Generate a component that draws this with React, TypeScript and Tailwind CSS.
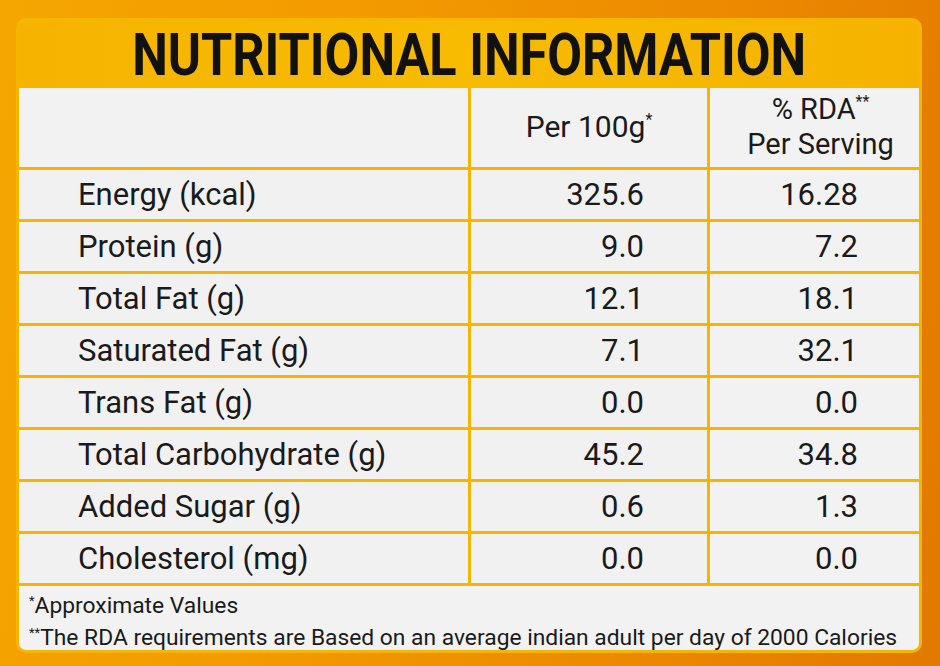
import React from "react";

const rows: [string, string, string][] = [
  ["Energy (kcal)", "325.6", "16.28"],
  ["Protein (g)", "9.0", "7.2"],
  ["Total Fat (g)", "12.1", "18.1"],
  ["Saturated Fat (g)", "7.1", "32.1"],
  ["Trans Fat (g)", "0.0", "0.0"],
  ["Total Carbohydrate (g)", "45.2", "34.8"],
  ["Added Sugar (g)", "0.6", "1.3"],
  ["Cholesterol (mg)", "0.0", "0.0"],
];

export default function App() {
  return (
    <div
      className="w-[940px] h-[666px] overflow-hidden bg-[linear-gradient(100deg,#f5a600_0%,#f39a00_35%,#ec8900_70%,#e27900_100%)] pt-[18px] pl-[16px] pr-[18px] pb-[13px] text-[#1a1a1a]"
      style={{ fontFamily: "Roboto, 'Liberation Sans', sans-serif" }}
    >
      <div className="w-[906px] rounded-[10px] border-[3px] border-[#f5b500] bg-[#f5b500] flex flex-col overflow-hidden">
        <div className="h-[67px] flex items-center justify-center bg-[linear-gradient(90deg,#f6b400,#f7bb00_50%,#f5b300)]">
          <div className="text-[59px] font-bold leading-none text-[#111] scale-x-[0.855] whitespace-nowrap">
            NUTRITIONAL INFORMATION
          </div>
        </div>
        <div className="grid grid-cols-[449px_236px_209px] gap-[3px] bg-[#f5b500]">
          <div className="h-[79px] bg-[#f2f2f2]" />
          <div className="h-[79px] bg-[#f2f2f2] flex items-center justify-center text-[30px] leading-none pb-[2px]">
            <span>
              Per 100g<span className="text-[16px] relative top-[-12px]">*</span>
            </span>
          </div>
          <div className="h-[79px] bg-[#f2f2f2] flex flex-col items-center justify-center text-[29px] leading-[30px] pl-[12px] pb-[2px]">
            <span>
              % RDA<span className="text-[16px] relative top-[-12px]">**</span>
            </span>
            <span>Per Serving</span>
          </div>
          {rows.map(([label, a, b]) => (
            <React.Fragment key={label}>
              <div className="h-[49px] bg-[#f1f1f1] flex items-center pl-[59px] text-[31px] leading-none">
                {label}
              </div>
              <div className="h-[49px] bg-[#f1f1f1] flex items-center justify-end pr-[63px] text-[31px] leading-none">
                {a}
              </div>
              <div className="h-[49px] bg-[#f2f2f2] flex items-center justify-end pr-[61px] text-[31px] leading-none">
                {b}
              </div>
            </React.Fragment>
          ))}
        </div>
        <div className="h-[64px] mt-[3px] bg-[#f2f2f2] pl-[10px] pt-[5px] text-[22.8px] leading-[29px] whitespace-nowrap">
          <div>
            <span className="text-[13px] relative top-[-8px]">*</span>Approximate Values
          </div>
          <div>
            <span className="text-[13px] relative top-[-8px]">**</span>The RDA requirements are Based on an average indian adult per day of 2000 Calories
          </div>
        </div>
      </div>
    </div>
  );
}
